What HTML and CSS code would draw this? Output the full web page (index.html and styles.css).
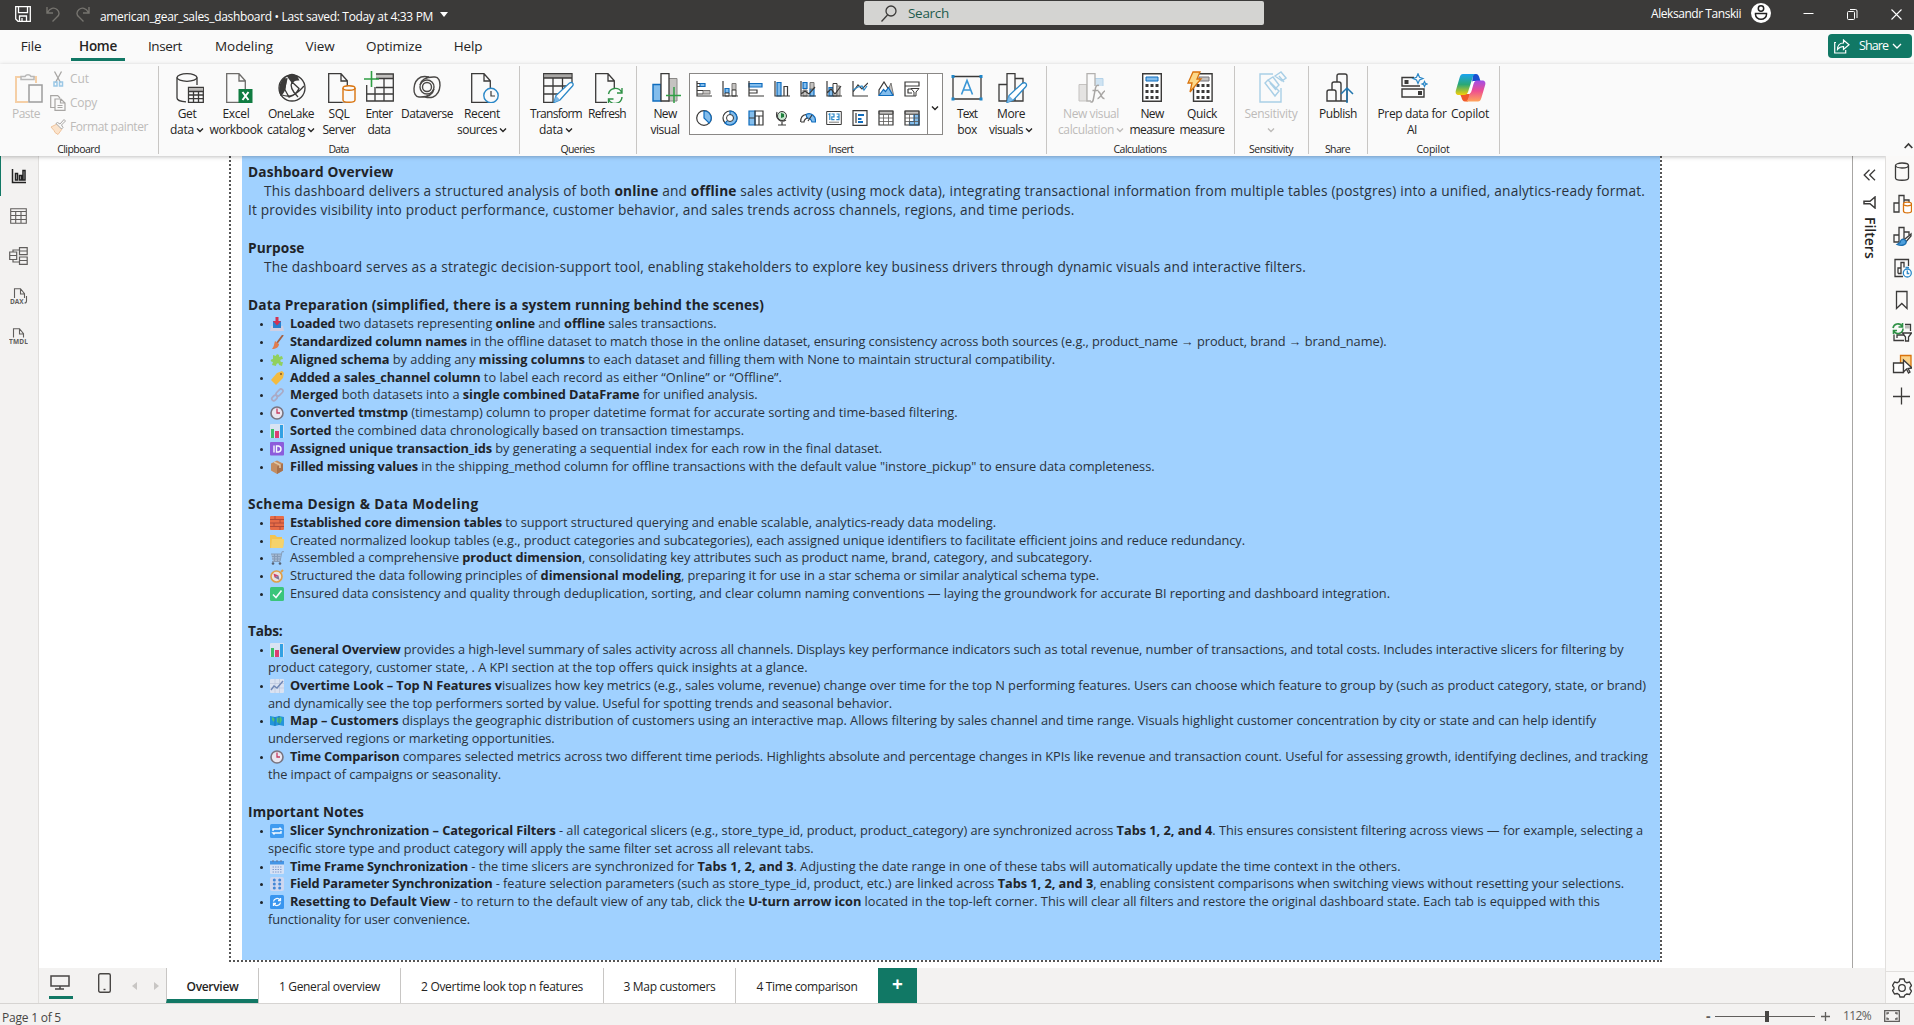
FILE: index.html
```html
<!DOCTYPE html>
<html lang="en">
<head>
<meta charset="utf-8">
<title>american_gear_sales_dashboard</title>
<link rel="stylesheet" href="styles.css">
</head>
<body>
<svg class="defs" aria-hidden="true">
  <symbol id="chev" viewBox="0 0 8 8"><path d="M1 2.500 4 5.500 7 2.500" fill="none" stroke="currentColor" stroke-width="1.400"/></symbol>
  <symbol id="doc" viewBox="0 0 20 30"><path d="M.7.7H13l6.300 7V29.300H.7z M13 .7V8h6.300" fill="none" stroke="currentColor" stroke-width="1.300"/></symbol>
  <symbol id="barchart" viewBox="0 0 14 14"><rect width="14" height="14" rx="1" fill="#dfe5f2"/><path d="M1 5h3v9H1z" fill="#35bd5c"/><path d="M5 7h4v7H5z" fill="#e32d62"/><path d="M10 1h3v13h-3z" fill="#279ce0"/></symbol>
  <symbol id="clock" viewBox="0 0 14 14"><circle cx="7" cy="7" r="6" fill="#f1e9ef" stroke="#756b72" stroke-width="1.600"/><path d="M7 2.500V7h3" fill="none" stroke="#cc2d50" stroke-width="1.300"/></symbol>
</svg>

<header class="titlebar">
  <div class="quick">
    <svg width="16" height="16" viewBox="0 0 16 16" fill="none" stroke="#fff" stroke-width="1.300"><path d="M.7.7h14.600v14.600H3L.7 13z M3.500.7v6h9v-6 M4.500 15v-5h7v5 M7 12v3"/></svg>
    <svg class="undo" width="14" height="16" viewBox="0 0 14 16" fill="none" stroke="#76746f" stroke-width="1.400"><path d="M1 1v6h6 M1.500 6.500C4 2 8 1 11 3.500s2.500 5.500 0 7.500L6.500 15.500"/></svg>
    <svg class="redo" width="14" height="16" viewBox="0 0 14 16" fill="none" stroke="#76746f" stroke-width="1.400"><path d="M13 1v6H7 M12.500 6.500C10 2 6 1 3 3.500s-2.500 5.500 0 7.500L7.500 15.500"/></svg>
  </div>
  <div class="filename"><span data-w="333">american_gear_sales_dashboard • Last saved: Today at 4:33 PM</span><i class="caret"></i></div>
  <div class="search">
    <svg width="16" height="17" viewBox="0 0 16 17" fill="none" stroke="#3b3a39" stroke-width="1.300"><circle cx="10" cy="6" r="5"/><path d="M6.500 10 .5 16.500"/></svg>
    <span data-w="41">Search</span>
  </div>
  <div class="account">
    <span data-w="90">Aleksandr Tanskii</span>
    <svg width="20" height="20" viewBox="0 0 20 20"><circle cx="10" cy="10" r="10" fill="#fff"/><g fill="none" stroke="#222" stroke-width="1.500"><circle cx="10" cy="5.500" r="2.700"/><path d="M4.500 10.500h11v1a5.500 4.800 0 0 1-11 0z"/></g></svg>
  </div>
  <div class="winctl">
    <svg width="11" height="11" viewBox="0 0 11 11"><path d="M.5 4.500h10" stroke="#fff"/></svg>
    <svg width="11" height="11" viewBox="0 0 11 11" fill="none" stroke="#fff"><rect x=".5" y="2.500" width="7" height="8" rx="1"/><path d="M3 .5h5.500a1.500 1.500 0 0 1 1.500 1.500V9"/></svg>
    <svg width="11" height="11" viewBox="0 0 11 11"><path d="M.5.500l10 10M10.500.500l-10 10" stroke="#fff" stroke-width="1.100"/></svg>
  </div>
</header>

<nav class="menu">
  <a class="m-file"><span data-w="20.500">File</span></a>
  <a class="m-home on"><span data-w="38">Home</span></a>
  <a class="m-insert"><span data-w="34">Insert</span></a>
  <a class="m-model"><span data-w="58">Modeling</span></a>
  <a class="m-view"><span data-w="29">View</span></a>
  <a class="m-opt"><span data-w="56">Optimize</span></a>
  <a class="m-help"><span data-w="28.500">Help</span></a>
  <button class="share">
    <svg width="16" height="15" viewBox="0 0 16 15" fill="none" stroke="#fff" stroke-width="1.200"><path d="M2 3.500H.7V14h11v-3 M9.500 1v3C5.500 4 3.500 7 3.500 10.500 5.500 8 7 7.500 9.500 7.500v3L15 5.700z"/></svg>
    <span data-w="29">Share</span>
    <svg width="10" height="10" viewBox="0 0 10 10"><path d="M1 3l4 4 4-4" fill="none" stroke="#fff" stroke-width="1.300"/></svg>
  </button>
</nav>

<section class="ribbon">
  <div class="group g-clip">
    <div class="tools">
      <div class="item dim i-paste">
        <svg width="28" height="30" viewBox="0 0 28 30" fill="none" stroke-width="1.500"><path d="M6 4H1v25h12M19 4h2v6" stroke="#f5cfa6" stroke-width="2"/><path d="M6 6.500v-3h4a3.500 3.500 0 0 1 6 0h3v3z" stroke="#b8b8b8"/><path d="M14 12h13v17H14z" stroke="#9d9d9d" fill="#fafafa"/></svg>
        <span data-w="28">Paste</span>
      </div>
      <div class="smalls">
        <div><svg width="16" height="16" viewBox="0 0 16 16" fill="none"><path d="M4.500.500l6 11M11.500.500l-6 11" stroke="#a8a6a4" stroke-width="1.300"/><path d="M4 11h3v4H4zM9.500 11h3v4h-3z" stroke="#9bc8e6" stroke-width="1.500"/></svg><span data-w="19">Cut</span></div>
        <div><svg width="16" height="16" viewBox="0 0 16 16" fill="#fafafa" stroke="#a8a6a4" stroke-width="1.200"><path d="M4.500 12.500H.700V.700h7L10 3 M5 4h6l4 4v7.400H5z M10.500 4v4H15 M7.500 10.500h5M7.500 12.500h5"/></svg><span data-w="27">Copy</span></div>
        <div><svg width="16" height="16" viewBox="0 0 16 16"><path d="M1 8l6-3 5 5-4 5.500-3-2-1-2z" fill="#fbe3cb" stroke="#efc39c"/><path d="M6 4.500l1.500-1L10 5l4-4.500L15.500 2l-4 4 1.500 2.500-1.500 1.500z" fill="#fafafa" stroke="#a8a6a4"/></svg><span data-w="78">Format painter</span></div>
      </div>
    </div>
    <div class="caption"><span data-w="42.500">Clipboard</span></div>
  </div>

  <div class="group g-data">
    <div class="tools">
      <div class="item w44">
        <svg class="o5" width="28" height="30" viewBox="0 0 28 30" fill="none" stroke="#3b3a39" stroke-width="1.300"><ellipse cx="11" cy="4.500" rx="10" ry="3.800"/><path d="M1 4.500V25c0 2 4 3.600 9 3.800M21 4.500V12"/><path d="M12.500 14.500h14.800v14.800H12.500z" fill="#fafafa"/><path d="M13 15h14v3H13z" fill="#bcbab8" stroke="none"/><path d="M12.500 18.500h15M12.500 22h15M12.500 25.700h15M17.500 18.500v11M22.500 18.500v11"/></svg>
        <span data-w="18.500">Get</span><div><span data-w="24">data</span><svg class="cv"><use href="#chev"/></svg></div>
      </div>
      <div class="item w54">
        <svg class="o6" width="27" height="30" viewBox="0 0 27 30"><use href="#doc" width="20" height="30" color="#6d6b69"/><path d="M12.500 16h14v14h-14z" fill="#107c41"/><path d="M16.500 19l6 8M22.500 19l-6 8" stroke="#fff" stroke-width="2"/></svg>
        <span data-w="27">Excel</span><span data-w="53">workbook</span>
      </div>
      <div class="item w56">
        <svg class="o2" width="28" height="30" viewBox="0 0 28 30"><circle cx="14" cy="15" r="13" fill="#fafafa" stroke="#3b3a39" stroke-width="1.300"/><path d="M9 3.500C12-.500 17 0 20 4.500l1.500 3C17 7 15 9 14.500 11L9 3.500zM7.500 4C1 8 0 17 2.500 23c2-1 4-4 5-7l1-7z" fill="#3b3a39"/><path d="M9 5L6.500 16 11 24c6-1 8-5 10-8.500L14 9c-3 5 1 10 6 15M4 22c8 3 14 0 22-9" fill="none" stroke="#3b3a39" stroke-width="1.300"/></svg>
        <span data-w="46">OneLake</span><div><span data-w="38">catalog</span><svg class="cv"><use href="#chev"/></svg></div>
      </div>
      <div class="item w40">
        <svg class="o5" width="28" height="30" viewBox="0 0 28 30"><use href="#doc" width="20" height="30"/><path d="M14.500 14.500h13v15h-13z" fill="#fafafa"/><g fill="#fafafa" stroke="#d9730d" stroke-width="1.400"><path d="M15 15v12c0 3 12 3 12 0V15"/><ellipse cx="21" cy="15" rx="6" ry="2.200"/></g></svg>
        <span data-w="21">SQL</span><span data-w="33">Server</span>
      </div>
      <div class="item w40">
        <svg width="30" height="32" viewBox="0 0 30 32" class="up"><path d="M12 3.500h17v4H12z" fill="#c3c1bf"/><path d="M12 3h17.300v27H2.700V14M12 7.500h17M12 16.500h17M3 23h26M11 16v14M20 8v22" fill="none" stroke="#3b3a39" stroke-width="1.300"/><path d="M7.500 0v16M0 8h15" stroke="#2f9e44" stroke-width="1.600"/></svg>
        <span data-w="27">Enter</span><span data-w="23">data</span>
      </div>
      <div class="item w56">
        <svg width="28" height="30" viewBox="0 0 28 30" fill="none" stroke="#4a4846" stroke-width="1.400"><circle cx="14" cy="14" r="4.500"/><circle cx="14" cy="14" r="7"/><path d="M8 4C-1 8-1 24 6 24c3 0 13 1 15-8M20 24c9-4 9-20 2-20-3 0-13-1-15 8M8 4c3-1 6-.500 8 0M20 24c-3 1-6 .500-8 0"/></svg>
        <span data-w="52">Dataverse</span>
      </div>
      <div class="item w54">
        <svg class="o6" width="28" height="30" viewBox="0 0 28 30"><use href="#doc" width="20" height="30"/><circle cx="20" cy="22.500" r="7.200" fill="#fafafa" stroke="#2b88c8" stroke-width="1.400"/><path d="M20 18v5h4" fill="none" stroke="#3b3a39" stroke-width="1.200"/></svg>
        <span data-w="36">Recent</span><div><span data-w="40">sources</span><svg class="cv"><use href="#chev"/></svg></div>
      </div>
    </div>
    <div class="caption"><span data-w="20">Data</span></div>
  </div>

  <div class="group g-query">
    <div class="tools">
      <div class="item w60">
        <svg class="o5" width="31" height="30" viewBox="0 0 31 30"><path d="M1.500 1h27v4h-27z" fill="#a9a7a5"/><path d="M29 10V.7H.7v28.600H12M1 5h28M1 13h23M1 21h16M10 5v24M19.500 5v12" fill="none" stroke="#3b3a39" stroke-width="1.300"/><path d="M11 29.500l2-7L26.500 10c3-1.500 4.500 1 3 3L17 27z" fill="#fff" stroke="#2b88c8" stroke-width="1.300"/><path d="M11 29.500l2-7 4 4.500z" fill="#7ab8e8"/></svg>
        <span data-w="52">Transform</span><div><span data-w="24">data</span><svg class="cv"><use href="#chev"/></svg></div>
      </div>
      <div class="item w42">
        <svg class="o4" width="28" height="30" viewBox="0 0 28 30"><use href="#doc" width="20" height="30"/><path d="M12 15h16v15H12z" fill="#fafafa"/><path d="M13.500 21a7 7 0 0 1 13-2M27 24a7 7 0 0 1-13 3M27 15v5h-5M13.500 30v-4h5" fill="none" stroke="#2f9146" stroke-width="1.400"/></svg>
        <span data-w="38">Refresh</span>
      </div>
    </div>
    <div class="caption"><span data-w="34">Queries</span></div>
  </div>

  <div class="group g-insert">
    <div class="tools">
      <div class="item w46">
        <svg class="o4" width="30" height="30" viewBox="0 0 30 30"><path d="M1 11.500h8V28H1z" fill="#83bdec" stroke="#0f6cbd" stroke-width="1.400"/><path d="M16 5.500h9V28h-9z" fill="#c5c3c1" stroke="#8a8886"/><path d="M9 .7h8V28H9z" fill="#fff" stroke="#3b3a39" stroke-width="1.300"/><path d="M22 14v16M14 22.500h15" stroke="#2f9e44" stroke-width="1.500"/></svg>
        <span data-w="23">New</span><span data-w="29">visual</span>
      </div>
      <div class="gallery">
        <div class="grid">
          <svg viewBox="0 0 16 16"><path d="M4 2.500h5v3H4z" class="bl"/><path d="M7 9.500h7v3.500H7z" class="gr"/><path d="M1 0v15h15M1 2.500h3M1 5.500h3M1 9.500h6M1 13h6" class="k"/></svg>
          <svg viewBox="0 0 16 16"><path d="M3 7.500h4V12H3z" class="bl"/><path d="M3 12h4v3H3z" class="w"/><path d="M10 2.500h4V9h-4z" class="gr"/><path d="M10 9h4v6h-4z" class="w"/><path d="M1 0v15h15" class="k"/></svg>
          <svg viewBox="0 0 16 16"><path d="M1 2.500h13V6H1z" class="bl"/><path d="M1 0v15h15M1 9h8v3H1" class="k"/></svg>
          <svg viewBox="0 0 16 16"><path d="M3 1.500h4V15H3z" class="bl"/><path d="M1 0v15h15M10 15V5.500h3.500V15" class="k"/></svg>
          <svg viewBox="0 0 16 16"><path d="M3 1.500h4v6H3zM10 8h4v7h-4z" class="bl"/><path d="M10 1.500h4v6.500h-4zM3 9h4v6H3z" class="gr"/><path d="M1 0v15h15M1 13l4-3 4 3 6-7" class="k"/></svg>
          <svg viewBox="0 0 16 16"><path d="M3 6.500h4V15H3z" class="bl"/><path d="M7 2.500h4V15H7z" class="w"/><path d="M11 5h3v10h-3z" class="gr"/><path d="M1 0v15h15M1 12l4-4 4 5 6-8" class="k"/></svg>
          <svg viewBox="0 0 16 16"><path d="M1 0v15h15M1 11l5-7 4 4 6-6" class="k"/><path d="M1 9l5-3 4-1 2 4 3-4" class="bo"/></svg>
          <svg viewBox="0 0 16 16"><path d="M8 14l5-12 2.500 12z" class="gr"/><path d="M1 14V9l5-8 5 8" class="k"/><path d="M1 14.500l4.500-6 2 2 3-4 4.500 8z" class="bl"/></svg>
          <svg viewBox="0 0 16 16"><path d="M1 5V1h14v4zM1 5v10h9M4 8h4M4 8v4h4" class="k"/><path d="M7 7.500h8L12 11v4h-2v-4z" class="w"/></svg>
          <svg viewBox="0 0 16 16"><circle cx="8" cy="8" r="7.300" class="k"/><path d="M8 1a7 7 0 0 1 5 12L8 8z" class="bl"/></svg>
          <svg viewBox="0 0 16 16"><circle cx="8" cy="8" r="7" class="k"/><path d="M8 1a7 7 0 1 1-5 12l3-3a3 3 0 1 0 2-5z" class="bl"/><circle cx="8" cy="8" r="3.500" class="w"/></svg>
          <svg viewBox="0 0 16 16"><path d="M1 1h6v14H1z" class="bl"/><path d="M7 1h8v14H7zM7 6h8M1 8h6M11 6v9" class="k"/></svg>
          <svg viewBox="0 0 16 16"><circle cx="8" cy="6" r="4.500" fill="#c9e6d0" stroke="#3b3a39"/><path d="M7 3l3 1v3L7 8z" fill="#1d7f3c"/><path d="M3 2C1 9 7 13 12 10M8 12v3M4 15h8" class="k"/></svg>
          <svg viewBox="0 0 16 16"><path d="M6 4.500C11 2 16 6 15.500 12H12C11 9 9 8 7 8z" class="bl"/><path d="M.700 12C.500 7 3 5 6 4.500M1 12h3c0-2 2-4 4-4M8 11l4-6" class="k"/></svg>
          <svg viewBox="0 0 16 16"><path d="M.7 1.500h14.600v13H.7z" class="w"/><path d="M2.500 4.500l1.300-.7V10M5.500 4h2.500v2.800H5.800V9.700h2.700M10.500 4h2.500v5.700h-2.700M10.800 6.800h2" class="bo"/><path d="M3 12.200h10" class="k t"/></svg>
          <svg viewBox="0 0 16 16"><path d="M1 .7h14v14.600H1zM4 3v10" class="k"/><path d="M6 5h6M6 9h3.500M6 12h5" stroke="#0f6cbd" stroke-width="2"/></svg>
          <svg viewBox="0 0 16 16"><path d="M1 1h14v3H1z" class="gr"/><path d="M1 1h14v14H1z" class="k"/><path d="M1 4.500h14M1 8h14M1 11.500h14M5.500 4.500V15M10.500 4.500V15" class="k t"/></svg>
          <svg viewBox="0 0 16 16"><path d="M1 1h14v3H1z" class="gr"/><path d="M10 4.500h5V15H5.500v-3.500H10z" class="bl"/><path d="M1 1h14v14H1z" class="k"/><path d="M1 4.500h14M1 8h14M1 11.500h14M5.500 4.500V15M10.500 4.500V15" class="k t"/></svg>
        </div>
        <div class="more"><svg class="cv"><use href="#chev"/></svg></div>
      </div>
      <div class="item w44 i-text">
        <svg width="32" height="28" viewBox="0 0 32 28"><path d="M2 3.500h28V26H2z" fill="none" stroke="#3b3a39" stroke-width="1.300"/><path d="M.5 2h3v3h-3zM28.500 2h3v3h-3zM.5 24.500h3v3h-3zM28.500 24.500h3v3h-3z" fill="#1f86c9"/><path d="M10.500 21.500L16 7.500l5.500 14M12.500 17h7" fill="none" stroke="#3a96d6" stroke-width="1.600"/></svg>
        <span data-w="20">Text</span><span data-w="19.500">box</span>
      </div>
      <div class="item w44">
        <svg class="o4" width="30" height="30" viewBox="0 0 30 30"><path d="M1 11.500h8V28H1zM9 .7h8V28H9zM17 5.500h8V28h-8z" fill="#fafafa" stroke="#3b3a39" stroke-width="1.300"/><path d="M9 29.500l2-7L24 10.500c3-2 5.500.500 4 3L15.500 27z" fill="#fff" stroke="#2b88c8" stroke-width="1.300"/><path d="M9 29.500l2-7 4.500 4.500z" fill="#7ab8e8"/></svg>
        <span data-w="28">More</span><div><span data-w="34">visuals</span><svg class="cv"><use href="#chev"/></svg></div>
      </div>
    </div>
    <div class="caption"><span data-w="25">Insert</span></div>
  </div>

  <div class="group g-calc">
    <div class="tools">
      <div class="item w70 dim">
        <svg class="o2" width="28" height="30" viewBox="0 0 28 30"><path d="M1 11.500h8V28H1z" fill="#e4e3e2" stroke="#c5c3c1"/><path d="M16 5.500h9v8h-9z" fill="#cfe3f2" stroke="#b4d2e8"/><path d="M9 .7h8V28H9z" fill="#fafafa" stroke="#b3b1af" stroke-width="1.300"/><path d="M13 13h15v17H13z" fill="#fafafa"/><path d="M21 12.500c-3-1-3.500 2-4 5l-1.500 8c-.500 3-1 4-3 3.500M14.500 17.500h6M20 18.500c3 0 3 8 6.500 7M27 18c-2 0-5 8-7.500 7.500" fill="none" stroke="#a8a6a4" stroke-width="1.500"/></svg>
        <span data-w="56">New visual</span><div><span data-w="56">calculation</span><svg class="cv"><use href="#chev"/></svg></div>
      </div>
      <div class="item w52">
        <svg width="20" height="30" viewBox="0 0 20 30"><path d="M.7.7h18.600v27.600H.7z" fill="#fff" stroke="#3b3a39" stroke-width="1.400"/><path d="M4 4h12v4H4z" fill="#83bdec" stroke="#0f6cbd"/><path d="M3.500 11h3v3h-3zm5 0h3v3h-3zm5 0h3v3h-3zm-10 6h3v3h-3zm5 0h3v3h-3zm5 0h3v3h-3zm-10 6h3v3h-3zm5 0h3v3h-3zm5 0h3v3h-3z" fill="#3b3a39"/></svg>
        <span data-w="23">New</span><span data-w="45">measure</span>
      </div>
      <div class="item w48">
        <svg width="26" height="32" viewBox="0 0 26 32" class="up lf"><path d="M6.500 2.700h18.600v27.600H6.500z" fill="#fff" stroke="#3b3a39" stroke-width="1.400"/><path d="M12 6h10v4H12z" fill="#c5c3c1" stroke="#77757a"/><path d="M9.500 13h3v3h-3zm5 0h3v3h-3zm5 0h3v3h-3zm-10 6h3v3h-3zm5 0h3v3h-3zm5 0h3v3h-3zm-10 6h3v3h-3zm5 0h3v3h-3zm5 0h3v3h-3z" fill="#3b3a39"/><path d="M6 1h7l-3 7h4L3 21l2-9H1z" fill="#fcd98a" stroke="#d9730d" stroke-width="1.300"/></svg>
        <span data-w="30">Quick</span><span data-w="45">measure</span>
      </div>
    </div>
    <div class="caption"><span data-w="53">Calculations</span></div>
  </div>

  <div class="group g-sens">
    <div class="tools">
      <div class="item w54 dim">
        <svg width="28" height="32" viewBox="0 0 28 32" class="up o4" fill="none" stroke="#a9cfe6" stroke-width="1.400"><path d="M14 3H1v28h21V17"/><path d="M6 12l3-3 11 11-4 5zM9 9l5-3 6 8-3 3M16 5l6-4 5 6-4 3zM20 5l5 6M11 12l6 7"/></svg>
        <span data-w="53">Sensitivity</span><svg class="cv"><use href="#chev"/></svg>
      </div>
    </div>
    <div class="caption"><span data-w="44">Sensitivity</span></div>
  </div>

  <div class="group g-share">
    <div class="tools">
      <div class="item w44">
        <svg class="o4" width="28" height="30" viewBox="0 0 28 30" fill="#fafafa"><g stroke="#3b3a39" stroke-width="1.400"><path d="M11 13V3q0-2 2-2h6q2 0 2 2v26"/><path d="M6 17v-6q0-2 2-2h5q2 0 2 2v17"/><path d="M1 28V19q0-2 2-2h5q2 0 2 2v9zM10 28h11"/></g><path d="M21 30V15M15 21l6-6 6 6" fill="none" stroke="#2176ae" stroke-width="1.500"/></svg>
        <span data-w="38">Publish</span>
      </div>
    </div>
    <div class="caption"><span data-w="25">Share</span></div>
  </div>

  <div class="group g-cop">
    <div class="tools">
      <div class="item w72">
        <svg class="o4" width="27" height="30" viewBox="0 0 27 30" fill="none" stroke="#3b3a39" stroke-width="1.400"><path d="M13 4.500H1V13h18M1 16h22v8H1z"/><path d="M3.500 7h4v4h-4zM17 18h4v4h-4z" fill="#3b3a39" stroke="none"/><path d="M17 .7l1.500 3.500L22 5.500l-3.500 1.500L17 10.500 15.500 7 12 5.500l3.500-1.300zM23.500 8.500l.8 1.800 1.800.700-1.800.8-.800 1.700-.800-1.700-1.700-.8 1.700-.7z" stroke="#2b88c8" stroke-width="1.200"/></svg>
        <span data-w="69">Prep data for</span><span data-w="10">AI</span>
      </div>
      <div class="item w44">
        <svg width="31" height="30" viewBox="0 0 31 30"><defs><linearGradient id="ca" x1="0" y1="0" x2="0" y2="1"><stop offset="0" stop-color="#1aa3f0"/><stop offset=".5" stop-color="#2aa876"/><stop offset="1" stop-color="#f6d008"/></linearGradient><linearGradient id="cb" x1="0" y1="0" x2="0" y2="1"><stop offset="0" stop-color="#a04ee8"/><stop offset=".5" stop-color="#ee4f90"/><stop offset="1" stop-color="#ffa55a"/></linearGradient></defs><path d="M18 1h3c2 0 3 2 3.500 4l1.500 5h-9z" fill="#1a4fd0"/><path d="M13 28.500h-3c-2 0-3-2-3.500-4L5 21h10z" fill="#f0592b"/><path d="M8 1h13c-2 0-3 2-3.500 4L13 19c-.700 2-2 3-4 3H4c-3 0-4-2-3-5L4.500 5C5.300 2.500 6 1 8 1z" fill="url(#ca)"/><path d="M23 28.500H10c2 0 3-2 3.500-4L18 10.500c.700-2 2-3 4-3h5c3 0 4 2 3 5l-3.500 12c-.800 2.500-1.500 4-3.500 4z" fill="url(#cb)"/><path d="M14 20.500l3.500-12.500h3c-1 .5-1.500 1.500-2 3L16.500 18c-.500 1.500-1 2.500-2.500 2.500z" fill="#fff"/></svg>
        <span data-w="38">Copilot</span>
      </div>
    </div>
    <div class="caption"><span data-w="33">Copilot</span></div>
  </div>
  <svg class="collapse" width="9" height="8" viewBox="0 0 9 8"><path d="M.7 6L4.500 2l3.800 4" fill="none" stroke="#3b3a39" stroke-width="1.700"/></svg>
</section>

<main class="work">
  <aside class="views">
    <a class="on"><svg width="16" height="16" viewBox="0 0 16 16" fill="none" stroke="#222" stroke-width="1.500"><path d="M1.500 1v13.500H15M4.500 5.500h2V12h-2zM8.500 7.500h2V12h-2zM12 2.500h2V12h-2z"/></svg></a>
    <a><svg width="17" height="16" viewBox="0 0 17 16" fill="none" stroke="#605e5c" stroke-width="1.100"><path d="M.7.7h15.600v14.600H.7zM1 3.500h15M1 7.500h15M1 11.500h15M5.700 3.500V15M11 3.500V15"/></svg></a>
    <a><svg width="19" height="18" viewBox="0 0 19 18" fill="#f3f2f1" stroke="#605e5c" stroke-width="1.200"><path d="M4 5V3h6M4 12v3h6" fill="none"/><path d="M.7 5h7v7.500h-7zM1 8.500h6.500M10.500.7h7.700v7h-7.700zM10.500 4H18M10.500 10h7.700v7.300h-7.700zM10.500 13.500H18"/></svg></a>
    <a><svg width="18" height="17" viewBox="0 0 18 17" fill="none" stroke="#605e5c" stroke-width="1.100"><path d="M4.500 10V.7h6l4 5V10M10.500.7V6h4M16.500 8v5q0 2-2 2"/><text x="0" y="16" class="mini">DAX</text></svg></a>
    <a><svg width="19" height="17" viewBox="0 0 19 17" fill="none" stroke="#605e5c" stroke-width="1.100"><path d="M4.500 9.500V.7h6l4 5v3.800M10.500.7V6h4"/><text x="0" y="16" class="mini" textLength="19">TMDL</text></svg></a>
  </aside>

  <div class="canvas">
    <div class="page"><article class="doc">
      <h2><span data-w="145.500">Dashboard Overview</span></h2>
      <p class="ind"><span data-w="1381">This dashboard delivers a structured analysis of both <b>online</b> and <b>offline</b> sales activity (using mock data), integrating transactional information from multiple tables (postgres) into a unified, analytics-ready format.</span></p>
      <p><span data-w="826.500">It provides visibility into product performance, customer behavior, and sales trends across channels, regions, and time periods.</span></p>

      <h2 class="next"><span data-w="56.500">Purpose</span></h2>
      <p class="ind"><span data-w="1042">The dashboard serves as a strategic decision-support tool, enabling stakeholders to explore key business drivers through dynamic visuals and interactive filters.</span></p>

      <h2 class="next"><span data-w="516">Data Preparation (simplified, there is a system running behind the scenes)</span></h2>
      <ul>
        <li><svg viewBox="0 0 14 14"><path d="M1 9h12l1 5H0z" fill="#d5cfe0"/><path d="M3 4h8v7H3z" fill="#1c77c9"/><path d="M5.500 0h3v4H11L7 8.500 3 4h2.500z" fill="#d8203f"/></svg><b data-w="45.500">Loaded</b><span data-w="381"> two datasets representing <b>online</b> and <b>offline</b> sales transactions.</span></li>
        <li><svg viewBox="0 0 14 14"><path d="M13 0L7 8" stroke="#a5552f" stroke-width="1.800"/><path d="M5 6l4 3c0 3-3 5-7 5 2-2 2-5 3-8z" fill="#e8743b"/></svg><b data-w="177">Standardized column names</b><span data-w="919.500"> in the offline dataset to match those in the online dataset, ensuring consistency across both sources (e.g., product_name → product, brand → brand_name).</span></li>
        <li><svg viewBox="0 0 14 14"><path d="M3 2l3 1c0-3 4-2 3 1l3-1 1 3c-4 0-3 4 0 3l-1 4-3-1c0-3-3-2-3 1l-4-1 1-3c-3 0-3-3 0-3z" fill="#8fd04c"/></svg><b data-w="99.500">Aligned schema</b><span data-w="665.500"> by adding any <b>missing columns</b> to each dataset and filling them with None to maintain structural compatibility.</span></li>
        <li><svg viewBox="0 0 14 14"><path d="M7 2l5-2 2 2-1 5-7 7-5-5z" fill="#fdb92c"/><circle cx="11" cy="3" r="1" fill="#7c4a12"/></svg><b data-w="190.500">Added a sales_channel column</b><span data-w="301.500"> to label each record as either “Online” or “Offline”.</span></li>
        <li><svg viewBox="0 0 14 14" fill="none" stroke="#aca6bf" stroke-width="1.700"><rect x="-3" y="-2" width="6" height="4" rx="2" transform="translate(4.500 10) rotate(-45)"/><rect x="-4" y="-2" width="8" height="4" rx="2" transform="translate(9.500 4.500) rotate(-45)"/></svg><b data-w="48.500">Merged</b><span data-w="419"> both datasets into a <b>single combined DataFrame</b> for unified analysis.</span></li>
        <li><svg><use href="#clock"/></svg><b data-w="118">Converted tmstmp</b><span data-w="549.500"> (timestamp) column to proper datetime format for accurate sorting and time-based filtering.</span></li>
        <li><svg><use href="#barchart"/></svg><b data-w="41.500">Sorted</b><span data-w="412.500"> the combined data chronologically based on transaction timestamps.</span></li>
        <li><svg viewBox="0 0 14 14"><rect width="14" height="13.500" rx="1" fill="#8a50d8"/><path d="M4 3.500v7M6.500 4h2q2.500.5 2.500 3t-2.500 3h-2z" fill="none" stroke="#fff" stroke-width="1.400"/></svg><b data-w="202">Assigned unique transaction_ids</b><span data-w="390"> by generating a sequential index for each row in the final dataset.</span></li>
        <li><svg viewBox="0 0 14 14"><path d="M1 3.500L7 .5l6 3v7L7 14l-6-3.500z" fill="#c98650"/><path d="M1 3.500L7 6.500v7.500l6-3.500v-7L7 6.500z" fill="#a96739"/><path d="M4 2l6 3v3" stroke="#e9c79c" fill="none" stroke-width="1.500"/></svg><b data-w="128">Filled missing values</b><span data-w="736.500"> in the shipping_method column for offline transactions with the default value "instore_pickup" to ensure data completeness.</span></li>
      </ul>

      <h2 class="next"><span data-w="230.500">Schema Design &amp; Data Modeling</span></h2>
      <ul>
        <li><svg viewBox="0 0 14 14"><rect width="14" height="14" rx="1" fill="#ef6234"/><path d="M0 3.500h14M0 7h14M0 10.500h14M5 0v3.500M10 3.500V7M4 7v3.500M10 10.500V14" stroke="#b23c24"/></svg><b data-w="212">Established core dimension tables</b><span data-w="494"> to support structured querying and enable scalable, analytics-ready data modeling.</span></li>
        <li><svg viewBox="0 0 14 14"><path d="M0 1h5l2 2h5v2h2l-1 9H0z" fill="#fcc33c"/><path d="M2 5h12l-1 9H1z" fill="#ffd35c"/></svg><span data-w="955">Created normalized lookup tables (e.g., product categories and subcategories), each assigned unique identifiers to facilitate efficient joins and reduce redundancy.</span></li>
        <li><svg viewBox="0 0 14 14"><path d="M1 3h10l-1 7H3z" fill="#a4b6cd"/><path d="M14 .700h-2L10 10.500H2M1 3h10M2 5.500h8.500M2 8h8M4.500 3v7M7.500 3v7" fill="none" stroke="#8497b0"/><circle cx="3" cy="12.500" r="1.300" fill="#4d5564"/><circle cx="10" cy="12.500" r="1.300" fill="#4d5564"/></svg><span data-w="802">Assembled a comprehensive <b>product dimension</b>, consolidating key attributes such as product name, brand, category, and subcategory.</span></li>
        <li><svg viewBox="0 0 14 14"><circle cx="6.500" cy="7.500" r="5.500" fill="#f3e6dc" stroke="#e79a35" stroke-width="1.600"/><path d="M11 3l2-2" stroke="#e79a35" stroke-width="2"/><path d="M3.500 4.500l5 2-4 2z" fill="#d4315a"/><path d="M9.500 11l-5-2.500 4-2z" fill="#7b6c94"/></svg><span data-w="809">Structured the data following principles of <b>dimensional modeling</b>, preparing it for use in a star schema or similar analytical schema type.</span></li>
        <li><svg viewBox="0 0 14 14"><rect width="14" height="14" rx="1.500" fill="#2fc46d"/><path d="M3 7.500l3 3L11.500 3.500" fill="none" stroke="#fff" stroke-width="1.600"/></svg><span data-w="1100">Ensured data consistency and quality through deduplication, sorting, and clear column naming conventions — laying the groundwork for accurate BI reporting and dashboard integration.</span></li>
      </ul>

      <h2 class="next"><span data-w="34.500">Tabs:</span></h2>
      <ul>
        <li><svg><use href="#barchart"/></svg><b data-w="110.600">General Overview</b><span data-w="1223"> provides a high-level summary of sales activity across all channels. Displays key performance indicators such as total revenue, number of transactions, and total costs. Includes interactive slicers for filtering by</span></li>
        <li class="cont"><span data-w="539.500">product category, customer state, . A KPI section at the top offers quick insights at a glance.</span></li>
        <li><svg viewBox="0 0 14 14"><rect width="14" height="14" rx="1" fill="#e1e4f0"/><path d="M0 4.500h14M0 9h14M5 0v14M9.500 0v14" stroke="#bac1d6" stroke-width=".600"/><path d="M1 11l3-4 3 2 6-7" fill="none" stroke="#6a7fae" stroke-width="1.400"/></svg><b data-w="212">Overtime Look – Top N Features v</b><span data-w="1144">isualizes how key metrics (e.g., sales volume, revenue) change over time for the top N performing features. Users can choose which feature to group by (such as product category, state, or brand)</span></li>
        <li class="cont"><span data-w="624">and dynamically see the top performers sorted by value. Useful for spotting trends and seasonal behavior.</span></li>
        <li><svg viewBox="0 0 14 14"><path d="M0 2l5 1 4-1 5 1v9l-5-1-4 1-5-1z" fill="#168fd8"/><path d="M2 3l3 2-1 3-2-2zM7 4l4-1 1 3-2 4-3-2z" fill="#46c06a"/><path d="M5 3v9M9 2v9" stroke="#0d5e9e" stroke-width=".700"/></svg><b data-w="108.600">Map – Customers</b><span data-w="1197.500"> displays the geographic distribution of customers using an interactive map. Allows filtering by sales channel and time range. Visuals highlight customer concentration by city or state and can help identify</span></li>
        <li class="cont"><span data-w="286.500">underserved regions or marketing opportunities.</span></li>
        <li><svg><use href="#clock"/></svg><b data-w="109.400">Time Comparison</b><span data-w="1248.500"> compares selected metrics across two different time periods. Highlights absolute and percentage changes in KPIs like revenue and transaction count. Useful for assessing growth, identifying declines, and tracking</span></li>
        <li class="cont"><span data-w="233">the impact of campaigns or seasonality.</span></li>
      </ul>

      <h2 class="next"><span data-w="116">Important Notes</span></h2>
      <ul>
        <li><svg viewBox="0 0 14 14"><rect width="14" height="14" rx="1.500" fill="#3596ef"/><path d="M3 7V5h8L9.500 3.500M11 7v2H3l1.500 1.500" fill="none" stroke="#fff" stroke-width="1.400"/></svg><b data-w="265.700">Slicer Synchronization – Categorical Filters</b><span data-w="1087.300"> - all categorical slicers (e.g., store_type_id, product, product_category) are synchronized across <b>Tabs 1, 2, and 4</b>. This ensures consistent filtering across views — for example, selecting a</span></li>
        <li class="cont"><span data-w="545.500">specific store type and product category will apply the same filter set across all relevant tabs.</span></li>
        <li><svg viewBox="0 0 14 14"><rect y="1" width="14" height="13" rx="1" fill="#dce3f4"/><path d="M0 1h14v3.500H0z" fill="#3c8fe4"/><path d="M2.500 7h9M2.500 9.500h9M2.500 12h9" stroke="#7f97c8" stroke-dasharray="1.500 1"/><path d="M3 0v2M7 0v2M11 0v2" stroke="#5f6988"/></svg><b data-w="178">Time Frame Synchronization</b><span data-w="932.500"> - the time slicers are synchronized for <b>Tabs 1, 2, and 3</b>. Adjusting the date range in one of these tabs will automatically update the time context in the others.</span></li>
        <li><svg viewBox="0 0 14 14"><rect width="14" height="14" rx="2" fill="#d3d8ef"/><g fill="#3a7fd2"><circle cx="4.300" cy="3" r="1.500"/><circle cx="9.700" cy="3" r="1.500"/><circle cx="4.300" cy="7" r="1.500"/><circle cx="9.700" cy="7" r="1.500"/><circle cx="4.300" cy="11" r="1.500"/><circle cx="9.700" cy="11" r="1.500"/></g></svg><b data-w="202.500">Field Parameter Synchronization</b><span data-w="1131.500"> - feature selection parameters (such as store_type_id, product, etc.) are linked across <b>Tabs 1, 2, and 3</b>, enabling consistent comparisons when switching views without resetting your selections.</span></li>
        <li><svg viewBox="0 0 14 14"><rect width="14" height="14" rx="1.500" fill="#2d8fee"/><path d="M3.500 6.500a3.600 3.600 0 0 1 6.500-1.500M10.500 7.500A3.600 3.600 0 0 1 4 9M10.500 3v2.500H8M3.500 11V8.500H6" fill="none" stroke="#fff" stroke-width="1.300"/></svg><b data-w="160.400">Resetting to Default View</b><span data-w="1149.500"> - to return to the default view of any tab, click the <b>U-turn arrow icon</b> located in the top-left corner. This will clear all filters and restore the original dashboard state. Each tab is equipped with this</span></li>
        <li class="cont"><span data-w="202">functionality for user convenience.</span></li>
      </ul>
    </article></div>
  </div>

  <aside class="filters">
    <svg width="13" height="12" viewBox="0 0 13 12" fill="none" stroke="#3b3a39" stroke-width="1.300"><path d="M6.500.7L1.200 6l5.300 5.300M12 .7L6.700 6l5.300 5.300"/></svg>
    <svg width="13" height="13" viewBox="0 0 13 13" fill="none" stroke="#3b3a39" stroke-width="1.500"><path d="M12 1v11L7 7.800H1V5.200h6z"/></svg>
    <span class="vert">Filters</span>
  </aside>

  <aside class="panes">
    <svg viewBox="0 0 20 20" class="k"><ellipse cx="10" cy="3.500" rx="6.500" ry="2.500"/><path d="M3.500 3.500v12.500c0 3 13 3 13 0V3.500"/></svg>
    <svg viewBox="0 0 20 20" class="k"><path d="M2 18V9h5v9zM7 18V1.500h5V18M12 6h5v3"/><g stroke="#d9730d" fill="#fff"><path d="M11.500 10v7c0 2.500 8 2.500 8 0v-7"/><ellipse cx="15.500" cy="10" rx="4" ry="1.800"/></g></svg>
    <svg viewBox="0 0 20 20" class="k"><path d="M2 16V9h5v7zM7 16V1.500h5V14M12 6h5v3"/><path d="M19 8l-6 5-2 3 2 1 6-7z" fill="#fff"/><path d="M12.500 13.500c-3-1-4 1-4.500 3l-3 2c4 1.500 10 1 9-3.500z" fill="#4d9fdc" stroke="#1c6fb0"/></svg>
    <svg viewBox="0 0 20 20" class="k"><path d="M11 18.500H3V1.500h13.500V8M6 15.500V10h3V4.500h3v5M9 10v5.500H6"/><g stroke="#2b88c8" fill="#fff"><circle cx="15.300" cy="15" r="4"/><path d="M15.300 12.500v3h2M13.500 9.500h3.500" fill="none"/></g></svg>
    <svg viewBox="0 0 20 20" class="k"><path d="M4.500 1.500h10.500v17l-5.200-5-5.300 5z"/></svg>
    <svg viewBox="0 0 20 20" class="k"><path d="M13 2.500h5.500V9M2 12.500v6h10M5 16v-3h7"/><path d="M13 3.500h5v3h-5z" fill="#bcbab8" stroke="none"/><path d="M1 6a5 5 0 0 1 9-2M11 6.500a5 5 0 0 1-9 3M10.500 1v4h-4M1.500 12V8.500H5" stroke="#2f9146" stroke-width="1.600"/><path d="M10.500 11h9l-3 4v4h-3v-4z" fill="#fff"/></svg>
    <svg viewBox="0 0 20 20" class="k"><path d="M8.500 1.500h10.500v11H8.500z" fill="#fbd38b" stroke="#d9730d"/><path d="M1.500 9h10v9.500h-10z" fill="#fff"/><path d="M11.500 6v12l3-3 2 4 1.500-1-2-3.500 4-.5z" fill="#fff"/></svg>
    <svg viewBox="0 0 20 20" class="k"><path d="M9.500 1.500v17M1 10.500h17"/></svg>
    <div class="gear"><svg viewBox="0 0 20 20" class="k"><circle cx="10" cy="10" r="3.300"/><path d="M8 1l4 0 .800 2.500 2 1.200L17.500 4l2 3.500L18 9.500v1.500l1.500 2-2 3.500-2.700-.5-2 1.200L12 19H8l-.800-2.300-2-1.200-2.700.5-2-3.500L2 11V9.500L.5 7.500l2-3.500 2.700.700 2-1.200z"/></svg></div>
  </aside>
</main>

<footer class="tabs">
  <div class="rail"></div>
  <div class="dev">
    <span class="desk"><svg width="20" height="15" viewBox="0 0 20 15" fill="none" stroke="#484644" stroke-width="1.500"><path d="M1 1h18v10H1zM10 11v3M5 14h9"/></svg></span>
    <svg class="ph" width="13" height="20" viewBox="0 0 13 20" fill="none" stroke="#484644" stroke-width="1.400"><rect x=".7" y=".7" width="11.600" height="18.600" rx="1.500"/><path d="M5.500 16.500h2"/></svg>
    <i class="al"></i><i class="ar"></i>
  </div>
  <a class="t1 on"><span data-w="52">Overview</span></a>
  <a class="t2"><span data-w="101">1 General overview</span></a>
  <a class="t3"><span data-w="162">2 Overtime look top n features</span></a>
  <a class="t4"><span data-w="92">3 Map customers</span></a>
  <a class="t5"><span data-w="101">4 Time comparison</span></a>
  <button class="plus">+</button>
</footer>
<div class="status">
  <span data-w="59">Page 1 of 5</span>
  <div class="zoom"><b>-</b><i class="track"><i></i></i><svg width="9" height="9" viewBox="0 0 9 9"><path d="M4.500 0v9M0 4.500h9" stroke="#605e5c" stroke-width="1.300"/></svg><span data-w="28">112%</span>
  <svg width="16" height="12" viewBox="0 0 16 12" fill="none" stroke="#605e5c" stroke-width="1.300"><path d="M.7.700h14.600v10.600H.7z"/><path d="M3 4.500V3h2M11 3h2v1.500M13 7.500V9h-2M5 9H3V7.500"/></svg></div>
</div>
<script src="fit.js"></script>
</body>
</html>
```
FILE: fit.js
```js
// Tracks each label so that it takes the advance width given in data-w.
for (const el of document.querySelectorAll('[data-w]')) {
  const want = parseFloat(el.dataset.w);
  const n = el.textContent.length;
  let ls = 0;
  for (let i = 0; i < 3; i++) {
    ls += (want - el.getBoundingClientRect().width) / n;
    el.style.letterSpacing = ls.toFixed(4) + 'px';
  }
}
```
FILE: styles.css
```css
* { box-sizing: border-box; }
body { margin: 0; width: 1914px; height: 1025px; overflow: hidden; display: flex; flex-direction: column; background: #fff; color: #252423; font: 12px/16px "Open Sans", "Noto Sans", sans-serif; }
svg { display: block; flex: none; }
.defs { display: none; }
button { border: 0; padding: 0; font: inherit; }
[data-w] { display: inline-block; white-space: pre; flex: none; }

.titlebar { height: 30px; flex: none; background: #3b3a39; color: #fff; display: flex; align-items: flex-start; }
.quick { display: flex; width: 100px; padding: 6px 0 0 15px; flex: none; }
.undo { margin-left: 15px; }
.redo { margin-left: 16px; }
.filename { width: 764px; display: flex; padding-top: 9px; }
.caret { margin: 3px 0 0 7px; height: 0; border: 4.500px solid transparent; border-top: 5px solid #fff; border-bottom: 0; }
.search { margin-top: 1px; width: 400px; height: 24px; border-radius: 2px; background: #d4d4d2; color: #1d5b4d; display: flex; gap: 11px; padding: 4px 0 0 17px; font-size: 13.500px; }
.account { margin-left: 387px; display: flex; gap: 10px; padding-top: 3px; }
.account span { padding-top: 3px; }
.winctl { display: flex; gap: 33px; margin: 9px 0 0 32px; }

.menu { height: 34px; flex: none; background: #fafafa; display: flex; font-size: 13.500px; padding-left: 12px; }
.menu a { height: 31px; padding-top: 8px; display: flex; justify-content: center; }
.menu .on { font-weight: 600; border-bottom: 3px solid #117865; }
.m-file { width: 38px; }
.m-home { width: 54px; margin-left: 21px; }
.m-insert { width: 54px; margin-left: 13px; }
.m-model { width: 80px; margin-left: 12px; }
.m-view { width: 50px; margin-left: 11px; }
.m-opt { width: 76px; margin-left: 11px; }
.m-help { width: 50px; margin-left: 11px; }
.share { margin: 4px 2px 0 auto; width: 84px; height: 24px; border-radius: 4px; background: #117865; color: #fff; display: flex; align-items: center; padding: 0 0 0 6px; font-size: 12.500px; }
.share span { margin: 0 4px 0 9px; }

.ribbon { height: 92px; flex: none; background: #fafafa; display: flex; padding-top: 2px; box-shadow: 0 1px 4px rgba(0,0,0,.25); z-index: 1; }
.group { height: 88px; border-right: 1px solid #c8c6c4; }
.tools { height: 75px; display: flex; padding-top: 7px; }
.caption { height: 16px; display: flex; justify-content: center; font-size: 10.500px; padding-right: 1px; }
.g-clip { width: 159px; } .g-clip .tools { padding-left: 3px; }
.g-data { width: 361px; } .g-data .tools, .g-query .tools { padding-left: 6px; }
.g-query { width: 117px; }
.g-insert { width: 410px; } .g-insert .tools { padding-left: 5px; }
.g-calc { width: 188px; } .g-calc .tools { padding-left: 9px; }
.g-sens { width: 74px; } .g-sens .tools { padding-left: 9px; }
.g-share { width: 59px; } .g-share .tools { padding-left: 7px; }
.g-cop { width: 132px; } .g-cop .tools { padding-left: 8px; }
.item { display: flex; flex-direction: column; align-items: center; flex: none; color: #252423; }
.item > svg:first-child { margin-bottom: 3px; color: #3b3a39; }
.item > div { display: flex; align-items: center; gap: 2px; }
.item > .up { margin-top: -2px; }
.item > .lf { margin-right: 5px; }
.item > .o2 { margin-left: 2px; } .item > .o4 { margin-left: 4px; } .item > .o5 { margin-left: 5px; } .item > .o6 { margin-left: 6px; }
.item.dim, .smalls { color: #bdbbb9; }
.cv { width: 8px; height: 8px; }
.item > .cv { margin-top: 4px; }
.i-paste { width: 46px; } .i-paste > svg:first-child { margin-left: 5px; }
.smalls { display: flex; flex-direction: column; gap: 8px; padding: 0 0 0 1px; margin-top: -2px; }
.smalls div { display: flex; gap: 4px; height: 16px; }
.w40 { width: 40px; } .w42 { width: 42px; } .w44 { width: 44px; } .w46 { width: 46px; } .w48 { width: 48px; } .w52 { width: 52px; } .w54 { width: 54px; } .w56 { width: 56px; } .w60 { width: 60px; } .w70 { width: 70px; } .w72 { width: 72px; }
.i-text { margin-left: 2px; }
.i-text > svg:first-child { margin-bottom: 5px; }
.gallery { margin-left: 1px; width: 254px; height: 62px; border: 1px solid #8a8886; background: #fff; display: flex; }
.grid { display: grid; grid-template-columns: repeat(9, 16px); gap: 13px 10px; padding: 7px 0 0 6px; width: 237px; align-content: start; }
.grid svg { width: 16px; height: 16px; }
.more { flex: 1; border-left: 1px solid #8a8886; display: flex; justify-content: center; padding-top: 30px; }
.grid .k { fill: none; stroke: #3b3a39; stroke-width: 1.200; }
.grid .t { stroke: #5b5957; stroke-width: .8; }
.grid .bl { fill: #83bdec; stroke: #0f6cbd; stroke-width: 1.200; }
.grid .gr { fill: #c5c3c1; stroke: #797775; }
.grid .w { fill: #fff; stroke: #3b3a39; }
.grid .bo { fill: none; stroke: #2b88c8; stroke-width: 1.200; }
.collapse { margin: 76px 1px 0 auto; }

.work { height: 812px; flex: none; display: flex; }
.views { width: 39px; background: #f3f2f1; border-right: 1px solid #e1dfdd; flex: none; }
.views a { height: 40px; display: flex; align-items: center; justify-content: center; border-left: 1px solid transparent; padding-right: 2px; }
.views .on { border-left-color: #117865; }
.mini { font: 700 6.500px "Open Sans", sans-serif; fill: #605e5c; stroke: none; }
.canvas { width: 1813px; padding-left: 190px; background: #fff; flex: none; }
.page { width: 1433px; height: 806px; padding: 0 2px 2px 13px;
  background: repeating-linear-gradient(#555 0 2px, transparent 2px 4px) 0 0 / 2px 100% no-repeat, repeating-linear-gradient(#555 0 2px, transparent 2px 4px) 100% 0 / 2px 100% no-repeat, repeating-linear-gradient(90deg, #555 0 2px, transparent 2px 4px) 0 100% / 100% 2px no-repeat; }
.doc { height: 804px; background: #a0d1ff; padding: 6px 0 0 6px; color: #2b333c; overflow: hidden; }
.doc h2, .doc p { margin: 0; font-size: 13.700px; line-height: 19px; height: 19px; }
.doc h2, .doc b { color: #1f2429; font-weight: 700; }
.doc .next { margin-top: 19px; }
.doc .ind { padding-left: 16px; }
.doc ul { list-style: none; margin: 0; padding: 0; font-size: 12.800px; }
.doc li { height: 17.870px; line-height: 17.870px; display: flex; align-items: center; padding-left: 21.500px; position: relative; top: 1px; }
.doc li svg { width: 14px; height: 14px; margin-right: 6.500px; opacity: .9; }
.doc li::before { content: ""; position: absolute; left: 12px; top: 8px; width: 3px; height: 3px; border-radius: 50%; background: #1f2429; }
.doc .cont { padding-left: 20px; }
.doc .cont::before { display: none; }

.filters { width: 33px; border-left: 1px solid #a8a6a4; padding: 13px 0 0 10px; flex: none; }
.filters svg { margin-bottom: 15px; }
.vert { display: block; writing-mode: vertical-rl; font-size: 14px; font-weight: 600; margin: -7px 0 0 -1px; }
.panes { width: 29px; background: #faf9f8; border-left: 1px solid #e1dfdd; height: 847px; flex: none; padding: 6px 0 0 6px; display: flex; flex-direction: column; gap: 12px; position: relative; z-index: 1; }
.panes svg { width: 20px; height: 20px; }
.panes .k { fill: none; stroke: #3b3a39; stroke-width: 1.300; }
.gear { margin: auto 0 0 -6px; border-top: 1px solid #e1dfdd; height: 32px; padding: 6px 0 0 6px; }

.tabs { height: 35px; flex: none; background: #f3f2f1; display: flex; }
.rail { width: 39px; border-right: 1px solid #e1dfdd; }
.dev { width: 127px; display: flex; padding-left: 10px; }
.desk { width: 24px; height: 31px; padding: 7px 0 0 1px; border-bottom: 3px solid #117865; }
.ph { margin: 5px 0 0 25px; }
.al, .ar { border: 4.500px solid transparent; height: 0; margin-top: 14px; }
.al { border-right: 5px solid #c8c6c4; border-left: 0; margin-left: 21px; }
.ar { border-left: 5px solid #c8c6c4; border-right: 0; margin-left: 17px; }
.tabs a { background: #fff; border-left: 1px solid #c8c6c4; display: flex; justify-content: center; padding-top: 11px; }
.tabs .on { border-bottom: 4px solid #117865; font-weight: 600; }
.t1 { width: 92px; } .t2 { width: 142px; } .t3 { width: 203px; } .t4 { width: 132px; } .t5 { width: 143px; }
.plus { width: 39px; background: #117865; color: #fff; font-size: 19px; font-weight: 700; line-height: 30px; padding-bottom: 3px; }
.status { height: 22px; flex: none; background: #f3f2f1; border-top: 1px solid #d6d4d2; color: #484644; display: flex; justify-content: space-between; padding: 6px 14px 0 2px; }
.zoom { display: flex; align-items: center; height: 12px; width: 194px; color: #605e5c; }
.zoom b { width: 9px; font-size: 14px; }
.track { width: 100px; height: 1px; background: #605e5c; display: flex; justify-content: center; align-items: center; margin-right: 6px; }
.track i { width: 4px; height: 11px; background: #484644; flex: none; margin-left: 4px; }
.zoom span { margin: 0 13px; }
```
